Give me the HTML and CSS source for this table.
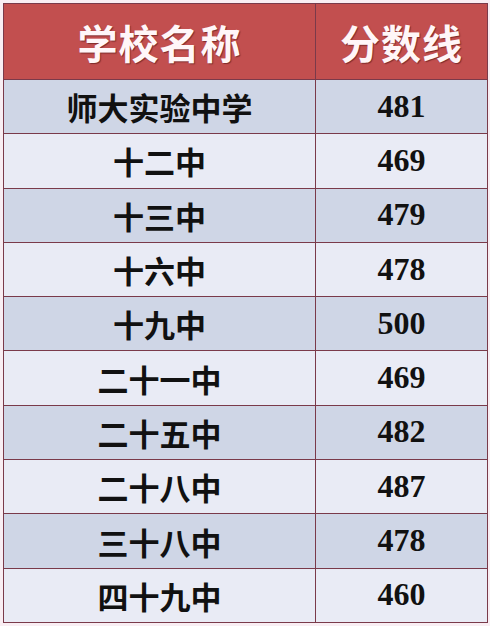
FILE: index.html
```html
<!DOCTYPE html>
<html lang="zh">
<head>
<meta charset="utf-8">
<link rel="stylesheet" href="styles.css">
</head>
<body>
<table class="score">
  <thead>
    <tr><th class="name">学校名称</th><th class="num">分数线</th></tr>
  </thead>
  <tbody>
    <tr class="odd"><td class="name">师大实验中学</td><td class="num">481</td></tr>
    <tr class="even"><td class="name">十二中</td><td class="num">469</td></tr>
    <tr class="odd"><td class="name">十三中</td><td class="num">479</td></tr>
    <tr class="even"><td class="name">十六中</td><td class="num">478</td></tr>
    <tr class="odd"><td class="name">十九中</td><td class="num">500</td></tr>
    <tr class="even"><td class="name">二十一中</td><td class="num">469</td></tr>
    <tr class="odd"><td class="name">二十五中</td><td class="num">482</td></tr>
    <tr class="even"><td class="name">二十八中</td><td class="num">487</td></tr>
    <tr class="odd"><td class="name">三十八中</td><td class="num">478</td></tr>
    <tr class="even"><td class="name">四十九中</td><td class="num">460</td></tr>
  </tbody>
</table>
</body>
</html>
```

FILE: styles.css
```css
html, body {
  margin: 0;
  padding: 0;
  background: #f9eef3;
}
body {
  padding: 3px;
  width: 490px;
  height: 626px;
  box-sizing: border-box;
}
.score {
  border-collapse: collapse;
  width: 485px;
  height: 620px;
  border: 1.5px solid #5a3344;
  table-layout: fixed;
}
.score th, .score td {
  padding: 0;
  text-align: center;
  vertical-align: middle;
  border: 1px solid #7a3a4a;
}
.score th {
  height: 75px;
  background: #c24f4f;
  color: #fff6f8;
  font-family: "Noto Sans CJK SC", sans-serif;
  font-weight: 700;
  font-size: 40px;
  line-height: 1;
  text-shadow: 1px 1px 1px rgba(80, 20, 20, 0.6);
  letter-spacing: 1px;
}
.score th.name { width: 311px; }
.score td.name {
  font-family: "Noto Sans CJK SC", sans-serif;
  font-weight: 700;
  font-size: 31px;
  color: #111;
  line-height: 1;
}
.score td.num {
  font-family: "Liberation Serif", serif;
  font-weight: 700;
  font-size: 32px;
  color: #111;
  line-height: 1;
  padding-bottom: 2px;
}
.odd td { background: #cfd6e6; }
.even td { background: #e9ebf5; }
```
